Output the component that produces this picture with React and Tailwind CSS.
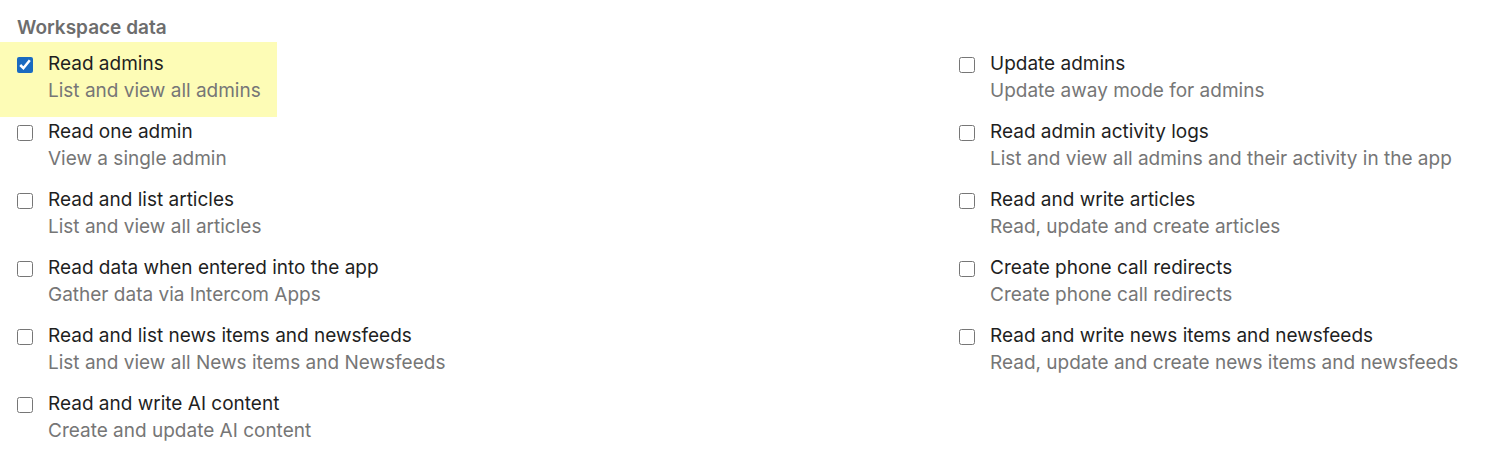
import React, { useState } from 'react';

const left = [
    { title: 'Read admins', desc: 'List and view all admins', checked: true },
    { title: 'Read one admin', desc: 'View a single admin' },
    { title: 'Read and list articles', desc: 'List and view all articles' },
    { title: 'Read data when entered into the app', desc: 'Gather data via Intercom Apps' },
    { title: 'Read and list news items and newsfeeds', desc: 'List and view all News items and Newsfeeds' },
    { title: 'Read and write AI content', desc: 'Create and update AI content' },
];

const right = [
    { title: 'Update admins', desc: 'Update away mode for admins' },
    { title: 'Read admin activity logs', desc: 'List and view all admins and their activity in the app' },
    { title: 'Read and write articles', desc: 'Read, update and create articles' },
    { title: 'Create phone call redirects', desc: 'Create phone call redirects' },
    { title: 'Read and write news items and newsfeeds', desc: 'Read, update and create news items and newsfeeds' },
];

const Scope = ({ item, checked, onToggle }) => {
    const highlighted = item.checked;
    return (
        <label
            className={
                highlighted
                    ? 'flex gap-[15px] justify-self-start bg-[#fdfcb6] -ml-[17px] pl-[17px] pr-4 -mt-2 pt-2 -mb-[13px] pb-[13px] cursor-pointer'
                    : 'flex gap-[15px] justify-self-start cursor-pointer'
            }
        >
            <input
                type="checkbox"
                checked={checked}
                onChange={onToggle}
                className="w-4 h-4 mt-[7px] shrink-0 accent-[#1a6ac0]"
            />
            <div className="flex flex-col text-[19px] leading-[27px]">
                <span className="text-[#1f1f1f]">{item.title}</span>
                <span className="text-[#767676]">{item.desc}</span>
            </div>
        </label>
    );
};

const App = () => {
    const [checked, setChecked] = useState(() =>
        Object.fromEntries([...left, ...right].map((s) => [s.title, !!s.checked]))
    );
    const toggle = (title) => setChecked({ ...checked, [title]: !checked[title] });

    // pair left/right so rows line up
    const cells = [];
    left.forEach((item, i) => {
        cells.push(item);
        if (right[i]) cells.push(right[i]);
    });

    return (
        <div className="min-h-[465px] bg-white pl-[17px] pt-4 font-['Inter',sans-serif]">
            <h2 className="text-[19px] leading-6 font-semibold text-[#6d6d6d]">Workspace data</h2>
            <div className="grid grid-cols-[942px_1fr] gap-y-[14px] mt-[10px]">
                {cells.map((item) => (
                    <Scope
                        key={item.title}
                        item={item}
                        checked={checked[item.title]}
                        onToggle={() => toggle(item.title)}
                    />
                ))}
            </div>
        </div>
    );
};

export default App;
